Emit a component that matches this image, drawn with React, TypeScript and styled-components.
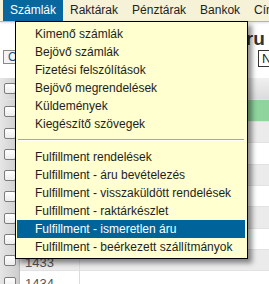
import styled, { createGlobalStyle } from "styled-components";

const GlobalStyle = createGlobalStyle`
  html, body {
    margin: 0;
    padding: 0;
    background: #fff;
    overflow: hidden;
  }
  body {
    font-family: "Liberation Sans", Arial, sans-serif;
  }
`;

const Page = styled.div`
  position: relative;
  width: 269px;
  height: 284px;
  overflow: hidden;
  background: #fff;
`;

const MenuBar = styled.nav`
  display: flex;
  height: 21px;
  padding-left: 3px;
  background: #f5f2d8;
  border-bottom: 1px solid #b4b4b4;
  box-shadow: 0 1px 2px rgba(0, 0, 0, 0.12);
  white-space: nowrap;
`;

const MenuItem = styled.div<{ $active?: boolean }>`
  padding: 0 7px;
  line-height: 21px;
  font-size: 12px;
  color: ${(p) => (p.$active ? "#fff" : "#222")};
  background: ${(p) => (p.$active ? "#08679e" : "transparent")};
`;

const Content = styled.main`
  display: flex;
  flex-direction: column;
`;

const Title = styled.h1`
  margin: 5px 0 0;
  padding-left: 22px;
  font-size: 19px;
  font-weight: bold;
  line-height: 23px;
  color: #333;
  white-space: nowrap;
`;

const Toolbar = styled.div`
  display: grid;
  grid-template-columns: 255px 120px;
  align-items: start;
  padding-left: 3px;
  height: 28px;
`;

const SmallButton = styled.button`
  justify-self: start;
  height: 14px;
  padding: 0 4px;
  border: 1px solid #8a8a8a;
  background: #f3f3f3;
  font: 12px "Liberation Sans", Arial, sans-serif;
  line-height: 12px;
  color: #1d4f86;
`;

const SearchBox = styled.div`
  height: 17px;
  box-sizing: border-box;
  padding-left: 3px;
  border: 1px solid #333;
  font-size: 13px;
  line-height: 15px;
  color: #222;
`;

const Table = styled.div`
  display: flex;
  flex-direction: column;
`;

type Tone = "head" | "green" | "grey" | "white";

const Row = styled.div<{ $tone: Tone }>`
  display: grid;
  grid-template-columns: 20px 60px 1fr;
  height: ${(p) => (p.$tone === "head" || p.$tone === "green" ? "22px" : "21.33px")};
  flex-shrink: 0;
  box-sizing: border-box;
  border-bottom: 1px solid #e2e2e2;
  background: ${(p) =>
    p.$tone === "head"
      ? "linear-gradient(#f0f0f0, #dcdcdc)"
      : p.$tone === "green"
      ? "#8fd49c"
      : p.$tone === "grey"
      ? "#ebebeb"
      : "#fff"};
`;

const CheckCell = styled.div`
  display: flex;
  align-items: center;
  justify-content: center;
  background: linear-gradient(to right, #e6e6e6, #cdcdcd);
  border-right: 1px solid #b8b8b8;
`;

const Check = styled.span`
  width: 12px;
  height: 11px;
  box-sizing: border-box;
  border: 1px solid #7d7d7d;
  border-radius: 2px;
  background: linear-gradient(#fff, #ececec);
`;

const IdCell = styled.div`
  padding: 4px 0 0 5px;
  border-right: 1px solid #dcdcdc;
  font-size: 13px;
  line-height: 18px;
  color: #555;
`;

const Cell = styled.div``;

const Dropdown = styled.ul`
  position: absolute;
  left: 15px;
  top: 21px;
  width: 233px;
  box-sizing: border-box;
  margin: 0;
  padding: 3px 2px 2px 1px;
  list-style: none;
  background: #ffffd0;
  border: 1px solid #000;
  box-shadow: 4px 4px 5px rgba(0, 0, 0, 0.45);
`;

const DropItem = styled.li<{ $active?: boolean }>`
  height: 18px;
  padding-left: 18px;
  font-size: 12px;
  line-height: 18px;
  white-space: nowrap;
  color: ${(p) => (p.$active ? "#fff" : "#1e1e1e")};
  background: ${(p) => (p.$active ? "#00649b" : "transparent")};
`;

const Separator = styled.li`
  height: 1px;
  margin: 6px 1px 7px;
  background: #a6a6a6;
  border-bottom: 1px solid #fff;
`;

const menus = ["Számlák", "Raktárak", "Pénztárak", "Bankok", "Címek"];

const invoiceItems = [
  "Kimenő számlák",
  "Bejövő számlák",
  "Fizetési felszólítások",
  "Bejövő megrendelések",
  "Küldemények",
  "Kiegészítő szövegek",
];

const fulfillmentItems = [
  "Fulfillment rendelések",
  "Fulfillment - áru bevételezés",
  "Fulfillment - visszaküldött rendelések",
  "Fulfillment - raktárkészlet",
  "Fulfillment - ismeretlen áru",
  "Fulfillment - beérkezett szállítmányok",
];

const rows: { id: string; tone: Tone }[] = [
  { id: "", tone: "head" },
  { id: "1426", tone: "green" },
  { id: "1427", tone: "grey" },
  { id: "1428", tone: "white" },
  { id: "1429", tone: "grey" },
  { id: "1430", tone: "white" },
  { id: "1431", tone: "grey" },
  { id: "1432", tone: "white" },
  { id: "1433", tone: "grey" },
  { id: "1434", tone: "white" },
];

const App = () => {
  return (
    <Page>
      <GlobalStyle />
      <MenuBar>
        {menus.map((m, i) => (
          <MenuItem key={m} $active={i === 0}>
            {m}
          </MenuItem>
        ))}
      </MenuBar>
      <Content>
        <Title>Fulfillment - ismeretlen áru</Title>
        <Toolbar>
          <SmallButton>Oszlopok</SmallButton>
          <SearchBox>Név</SearchBox>
        </Toolbar>
        <Table>
          {rows.map((r, i) => (
            <Row key={i} $tone={r.tone}>
              <CheckCell>
                <Check />
              </CheckCell>
              <IdCell>{r.id}</IdCell>
              <Cell />
            </Row>
          ))}
        </Table>
      </Content>
      <Dropdown>
        {invoiceItems.map((t) => (
          <DropItem key={t}>{t}</DropItem>
        ))}
        <Separator />
        {fulfillmentItems.map((t) => (
          <DropItem key={t} $active={t === "Fulfillment - ismeretlen áru"}>
            {t}
          </DropItem>
        ))}
      </Dropdown>
    </Page>
  );
};

export default App;
